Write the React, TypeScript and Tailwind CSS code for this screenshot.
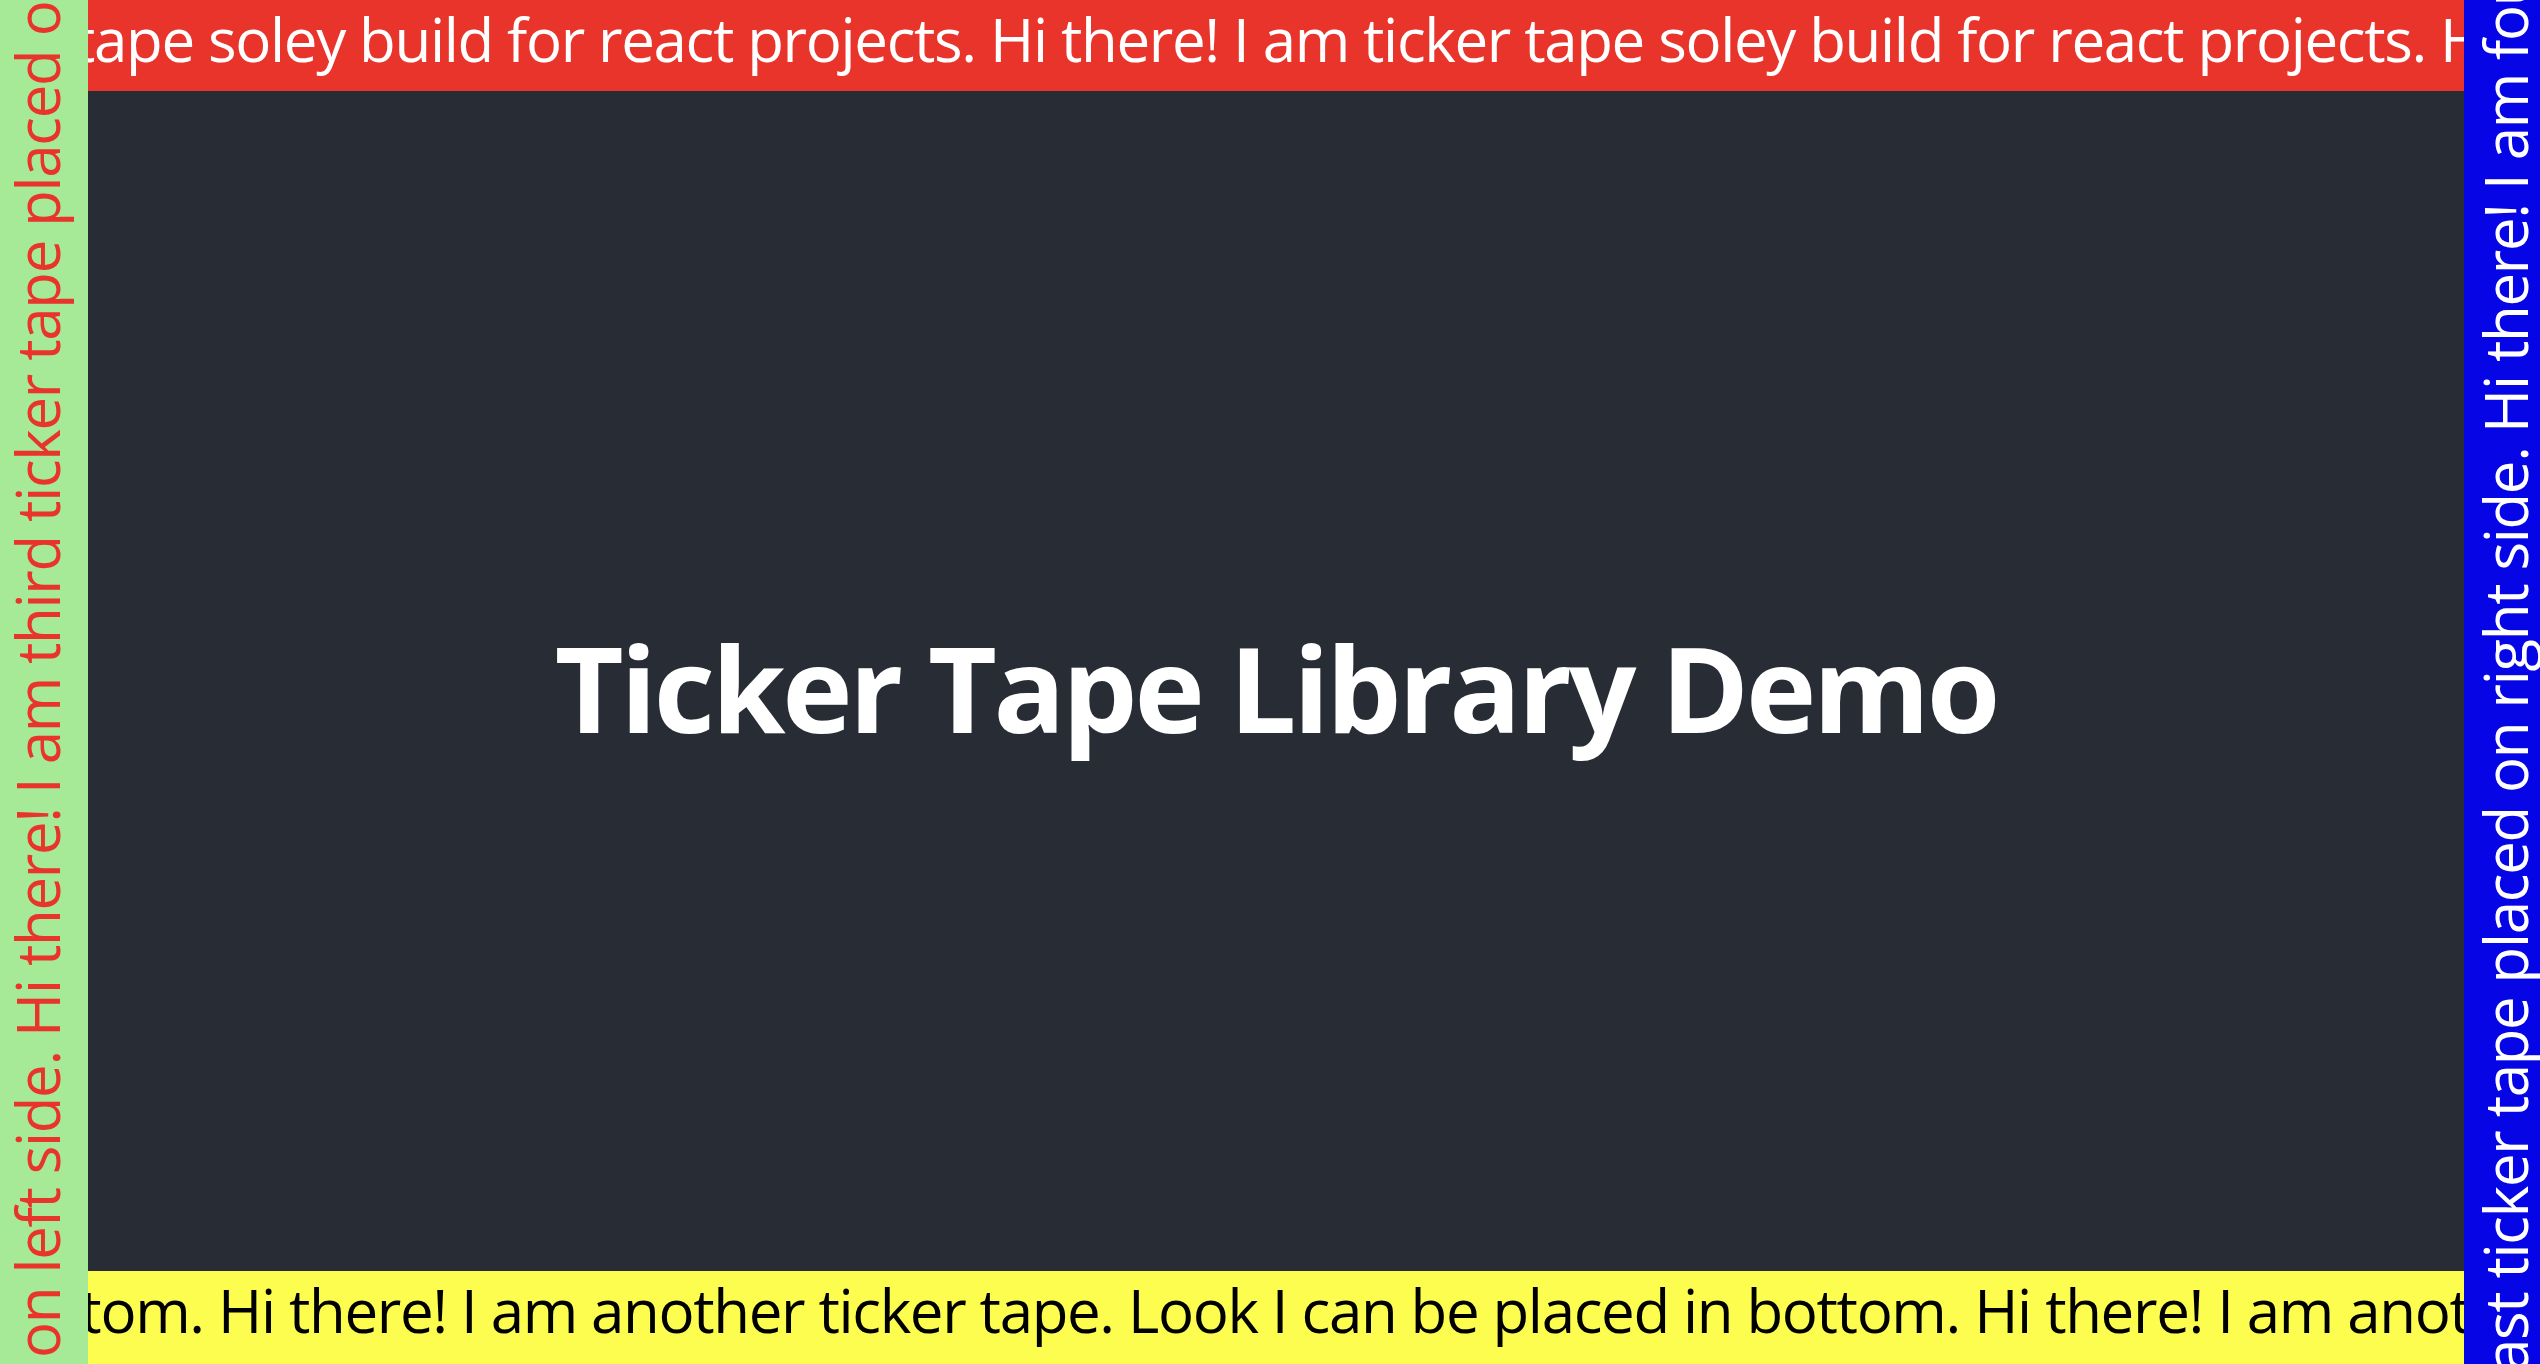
import React from "react";

const TOP = "Hi there! I am ticker tape soley build for react projects. ";
const BOTTOM = "Hi there! I am another ticker tape. Look I can be placed in bottom. ";
const LEFT = "Hi there! I am third ticker tape placed on left side. ";
const RIGHT = "Hi there! I am fourth and last ticker tape placed on right side. ";

export default function App() {
  return (
    <div className="flex h-screen w-full overflow-hidden bg-[#282c34] font-['Open_Sans',sans-serif]">
      {/* left tape */}
      <div className="h-full w-[88px] shrink-0 overflow-hidden bg-[#a6e997]">
        <div className="flex h-full w-full rotate-180 whitespace-pre text-[60px] leading-[74px] tracking-[-1.35px] text-[#e8342a] [writing-mode:vertical-rl]">
          <span className="flex shrink-0 justify-end [inline-size:327px]">on left side. </span>
          <span className="shrink-0">{LEFT + LEFT + LEFT}</span>
        </div>
      </div>

      {/* middle */}
      <div className="flex h-full min-w-0 flex-1 flex-col">
        <div className="flex h-[91px] shrink-0 overflow-hidden whitespace-pre bg-[#e8342a] text-[60px] leading-[79px] tracking-[-1.35px] text-white">
          <span className="flex w-[902px] shrink-0 justify-end">tape soley build for react projects. </span>
          <span className="shrink-0">{TOP + TOP + TOP}</span>
        </div>
        <div className="flex min-h-0 flex-1 items-center justify-center pt-3">
          <h1 className="text-[119px] font-bold leading-none tracking-[-3.2px] text-white">Ticker Tape Library Demo</h1>
        </div>
        <div className="flex h-[93px] shrink-0 overflow-hidden whitespace-pre bg-[#fdfd50] text-[60px] leading-[79px] tracking-[-1.35px] text-black">
          <span className="flex w-[130px] shrink-0 justify-end">placed in bottom. </span>
          <span className="shrink-0">{BOTTOM + BOTTOM + BOTTOM}</span>
        </div>
      </div>

      {/* right tape */}
      <div className="h-full w-[76px] shrink-0 overflow-hidden bg-[#0505e6]">
        <div className="flex h-full w-full rotate-180 whitespace-pre text-[60px] leading-[82px] tracking-[-1.35px] text-white [writing-mode:vertical-rl]">
          <span className="flex shrink-0 justify-end [inline-size:931px]">ast ticker tape placed on right side. </span>
          <span className="shrink-0">{RIGHT + RIGHT + RIGHT}</span>
        </div>
      </div>
    </div>
  );
}
